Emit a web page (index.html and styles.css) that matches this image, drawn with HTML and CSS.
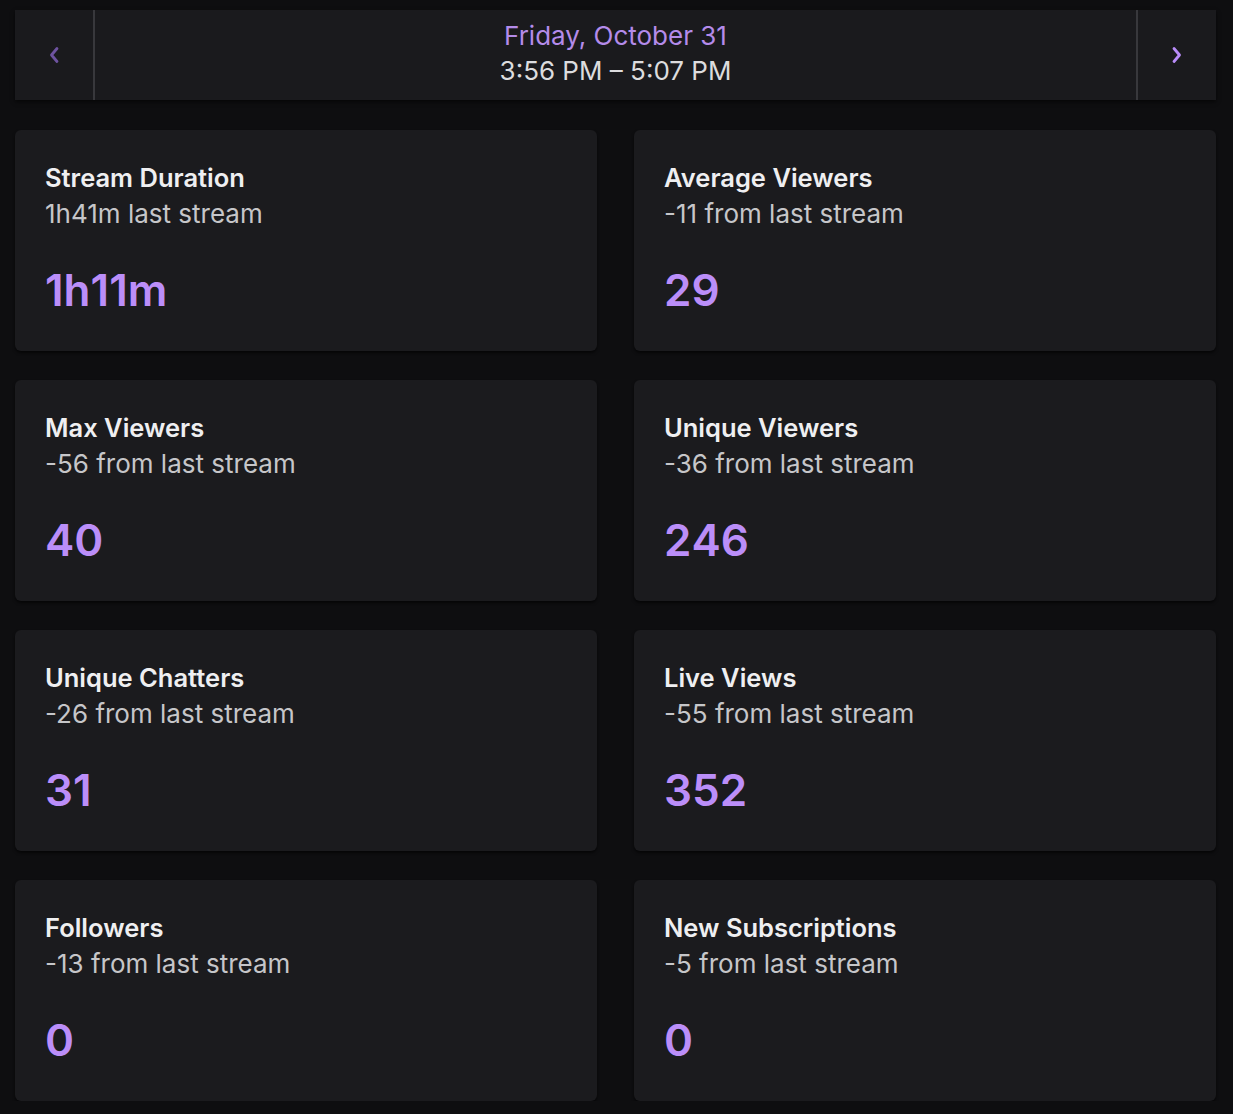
FILE: index.html
```html
<!DOCTYPE html>
<html lang="en">
<head>
<meta charset="utf-8">
<link rel="stylesheet" href="styles.css">
</head>
<body>
<div class="page">
  <div class="nav">
    <button class="nav-btn disabled" aria-label="Previous stream">
      <svg width="12" height="18" viewBox="0 0 12 18"><path d="M9 2.5 L3.5 9 L9 15.5" fill="none" stroke="currentColor" stroke-width="2.8" stroke-linecap="round" stroke-linejoin="round"/></svg>
    </button>
    <div class="nav-center">
      <div class="nav-date">Friday, October 31</div>
      <div class="nav-time">3:56 PM – 5:07 PM</div>
    </div>
    <button class="nav-btn" aria-label="Next stream">
      <svg width="12" height="18" viewBox="0 0 12 18"><path d="M3 2.5 L8.5 9 L3 15.5" fill="none" stroke="currentColor" stroke-width="2.8" stroke-linecap="round" stroke-linejoin="round"/></svg>
    </button>
  </div>
  <div class="grid">
    <div class="card"><div class="title">Stream Duration</div><div class="sub">1h41m last stream</div><div class="value">1h11m</div></div>
    <div class="card"><div class="title">Average Viewers</div><div class="sub">-11 from last stream</div><div class="value">29</div></div>
    <div class="card"><div class="title">Max Viewers</div><div class="sub">-56 from last stream</div><div class="value">40</div></div>
    <div class="card"><div class="title">Unique Viewers</div><div class="sub">-36 from last stream</div><div class="value">246</div></div>
    <div class="card"><div class="title">Unique Chatters</div><div class="sub">-26 from last stream</div><div class="value">31</div></div>
    <div class="card"><div class="title">Live Views</div><div class="sub">-55 from last stream</div><div class="value">352</div></div>
    <div class="card"><div class="title">Followers</div><div class="sub">-13 from last stream</div><div class="value">0</div></div>
    <div class="card"><div class="title">New Subscriptions</div><div class="sub">-5 from last stream</div><div class="value">0</div></div>
  </div>
</div>
</body>
</html>
```
FILE: styles.css
```css
html, body {
  margin: 0;
  background: #0e0e10;
}
body {
  font-family: Inter, "Noto Sans", sans-serif;
  color: #efeff1;
}
.page {
  padding: 10px 17px 0 15px;
  border-left: 3px solid #18181b;
  margin-left: -3px;
}
.nav {
  display: flex;
  height: 90px;
  background: #1a1a1d;
  box-shadow: 0 2px 4px rgba(0,0,0,0.6);
}
.nav-btn {
  width: 80px;
  flex: none;
  background: transparent;
  border: none;
  color: #b98cf8;
  display: flex;
  align-items: center;
  justify-content: center;
  padding: 0;
}
.nav-btn.disabled {
  color: #6e53a0;
}
.nav-btn:first-child {
  border-right: 2px solid #38383c;
}
.nav-btn:last-child {
  border-left: 2px solid #38383c;
}
.nav-center {
  flex: 1;
  display: flex;
  flex-direction: column;
  align-items: center;
  justify-content: center;
  font-size: 26px;
  line-height: 35px;
  padding-bottom: 4px;
  box-sizing: border-box;
}
.nav-date {
  color: #b48bea;
}
.nav-time {
  color: #dcdcde;
}
.grid {
  margin-top: 30px;
  display: grid;
  grid-template-columns: 1fr 1fr;
  column-gap: 37px;
  row-gap: 29px;
}
.card {
  height: 221px;
  box-sizing: border-box;
  background: #1b1b1e;
  border-radius: 6px;
  box-shadow: 0 2px 3px rgba(0,0,0,0.6);
  padding: 30px 30px 0 30px;
}
.title {
  font-size: 25.5px;
  font-weight: 600;
  line-height: 36px;
  color: #efeff1;
}
.sub {
  font-size: 26px;
  line-height: 36px;
  color: #c6c6c9;
}
.value {
  margin-top: 30px;
  font-size: 44px;
  font-weight: 600;
  line-height: 56px;
  color: #bb8ef9;
  font-kerning: none;
}
```
